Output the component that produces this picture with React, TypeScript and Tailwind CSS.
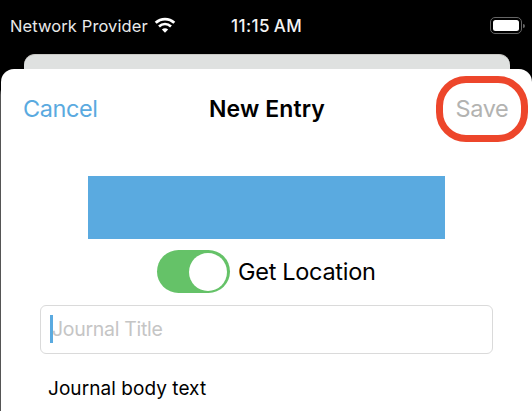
function StatusBar() {
  return (
    <div className="flex h-[54px] items-start text-[#e9e9e9]">
      <div className="ml-[10px] mt-[16px] flex w-[221px] items-center">
        <span className="w-[144px] text-[16.5px] leading-[20px] tracking-[0.1px]">Network Provider</span>
        <svg className="mt-[-1px] h-[17px] w-[22px]" viewBox="0 0 22 17" fill="none" stroke="#fff">
          <path d="M1.7 5.8C7 .8 15 .8 20.3 5.8" strokeWidth="2.8" />
          <path d="M5 9.5c3.5-3.4 8.5-3.4 12 0" strokeWidth="2.6" />
          <path d="M7.9 12.5c1.8-1.7 4.4-1.7 6.2 0L11 15.8z" fill="#fff" stroke="none" />
        </svg>
      </div>
      <span className="mt-[16px] w-[259px] text-[17px] font-medium leading-[20px] tracking-[0.4px] text-[#f4f4f4]">11:15<span className="ml-[-1px]"> AM</span></span>
      <div className="mt-[17px] flex items-center gap-px">
        <div className="h-[17px] w-[32px] rounded-[5px] border border-[#666] p-[2px]">
          <div className="h-full w-full rounded-[2.5px] bg-white" />
        </div>
        <div className="h-[4px] w-[2px] rounded-r bg-[#666]" />
      </div>
    </div>
  );
}

export default function App() {
  return (
    <div className="flex h-[411px] w-[532px] flex-col overflow-hidden bg-black font-['Inter','Liberation_Sans',sans-serif]">
      <StatusBar />
      <div className="ml-[24px] mr-[22px] h-[30px] shrink-0 rounded-t-[11px] border-t border-[#c9c9c5] bg-[#dfe1e0]" />
      <main className="relative ml-px mt-[-15px] flex-1 rounded-t-[13px] bg-white shadow-[-1px_13px_0_#555]">
        <header className="flex h-[72px] items-start">
          <button className="ml-[22px] mt-[25px] w-[186px] text-left text-[23.5px] leading-[30px] tracking-[-0.4px] text-[#5aaae0]">Cancel</button>
          <h1 className="mt-[25px] w-[227px] text-[23px] font-semibold leading-[30px] tracking-[0.1px]">New Entry</h1>
          <button className="mt-[7px] flex h-[66px] w-[92px] shrink-0 items-center justify-center rounded-[30px] border-[7px] border-[#ed462b] text-[23.5px] leading-[30px] tracking-[-0.4px] text-[#b3b3b1]">Save</button>
        </header>
        <div className="ml-[87px] mt-[35px] h-[63px] w-[357px] bg-[#5aaae0]" />
        <div className="ml-[156px] mt-[11px] flex h-[43px] items-center">
          <div className="flex h-[43px] w-[73px] items-center justify-end rounded-full bg-[#65c268] pr-[3px]">
            <div className="size-[38px] rounded-full bg-white" />
          </div>
          <span className="ml-[8px] text-[23.5px] leading-[30px] tracking-[-0.3px]">Get Location</span>
        </div>
        <div className="ml-[39px] mt-[12px] flex h-[49px] w-[453px] items-center rounded-[6px] border border-[#dadada] pb-px pl-[9px]">
          <div className="h-[28px] w-[3px] shrink-0 bg-[#5aaae0]" />
          <span className="ml-[-1px] text-[19.5px] leading-[28px] tracking-[-0.3px] text-[#c5c5c5]">Journal Title</span>
        </div>
        <p className="ml-[47px] mt-[21px] text-[19px] leading-[28px] tracking-[0.06px]">Journal body text</p>
      </main>
    </div>
  );
}
